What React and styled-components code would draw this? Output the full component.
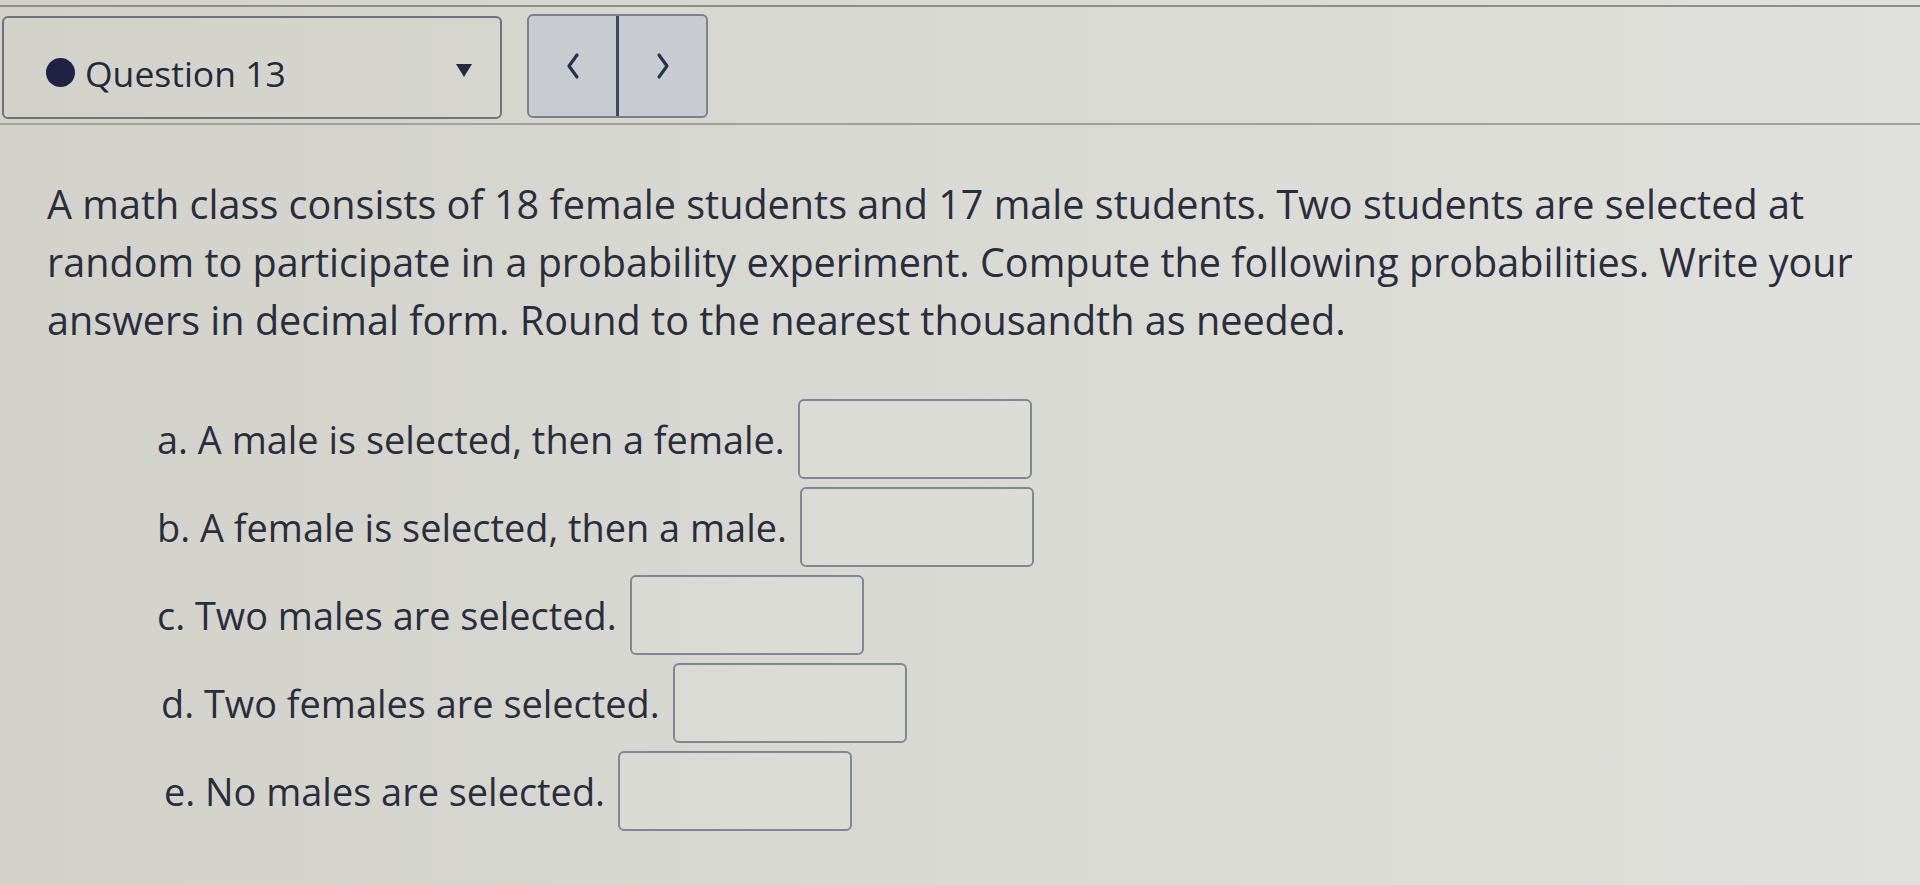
import styled, { createGlobalStyle } from 'styled-components'

const Global = createGlobalStyle`
  html, body {
    margin: 0;
    padding: 0;
  }
  body {
    width: 1920px;
    height: 885px;
    overflow: hidden;
    background: linear-gradient(90deg, #d2d2cb 0%, #d9d9d3 45%, #e0e0dc 100%);
    font-family: "Open Sans", "Noto Sans", sans-serif;
    color: #2c2f3d;
  }
`

const Page = styled.div`
  display: flex;
  flex-direction: column;
  height: 885px;
`

const TopRule = styled.div`
  margin-top: 5px;
  height: 2px;
  background: #8e8e89;
`

const Header = styled.div`
  display: flex;
  align-items: flex-start;
  gap: 25px;
  padding: 7px 0 0 2px;
  height: 118px;
  box-sizing: border-box;
  border-bottom: 2px solid #a2a29c;
`

const Dropdown = styled.div`
  display: flex;
  align-items: center;
  width: 500px;
  height: 103px;
  margin-top: 2px;
  box-sizing: border-box;
  border: 2px solid #6f7277;
  border-radius: 6px;
  padding: 10px 28px 0 42px;
`

const Dot = styled.span`
  width: 29px;
  height: 29px;
  border-radius: 50%;
  background: #1f2242;
  flex: none;
`

const QuestionLabel = styled.span`
  margin-left: 10px;
  font-size: 35.5px;
  font-weight: 500;
  color: #242838;
  flex: 1;
`

const Caret = styled.span`
  width: 0;
  height: 0;
  margin-top: -4px;
  border-left: 8px solid transparent;
  border-right: 8px solid transparent;
  border-top: 13px solid #262a40;
`

const Nav = styled.div`
  display: flex;
  height: 104px;
  box-sizing: border-box;
  border: 2px solid #7c8087;
  border-radius: 6px;
  background: #c8ccd0;
  overflow: hidden;
`

const NavButton = styled.div`
  width: 87px;
  display: flex;
  align-items: center;
  justify-content: center;
  border-left: ${p => (p.$divider ? '3px solid #3b4860' : 'none')};
`

const Body = styled.div`
  padding: 50px 0 0 47px;
`

const Prompt = styled.p`
  margin: 0;
  width: 1860px;
  font-size: 39.6px;
  font-weight: 500;
  line-height: 58px;
  color: #2a2d3c;
`

const Items = styled.div`
  display: flex;
  flex-direction: column;
  gap: 8px;
  margin-top: 50px;
  padding-left: 110px;
`

const Item = styled.div`
  display: flex;
  align-items: center;
  gap: 13px;
  height: 80px;
  padding-left: ${p => p.$shift || 0}px;
`

const ItemText = styled.span`
  font-size: 37.9px;
  font-weight: 500;
  color: #2a2d3c;
`

const AnswerBox = styled.div`
  width: 234px;
  height: 80px;
  box-sizing: border-box;
  border: 2px solid #80878f;
  border-radius: 6px;
  background: rgba(255, 255, 255, 0.08);
`

const Chevron = ({ dir }) => (
  <svg width="16" height="28" viewBox="0 0 16 28">
    <polyline
      points={dir === 'left' ? '12,3 4,14 12,25' : '4,3 12,14 4,25'}
      fill="none"
      stroke="#283150"
      strokeWidth="3.2"
      strokeLinecap="round"
      strokeLinejoin="round"
    />
  </svg>
)

const items = [
  { text: 'a. A male is selected, then a female.' },
  { text: 'b. A female is selected, then a male.' },
  { text: 'c. Two males are selected.' },
  { text: 'd. Two females are selected.', shift: 4 },
  { text: 'e. No males are selected.', shift: 7 },
]

export default function App() {
  return (
    <Page>
      <Global />
      <TopRule />
      <Header>
        <Dropdown>
          <Dot />
          <QuestionLabel>Question 13</QuestionLabel>
          <Caret />
        </Dropdown>
        <Nav>
          <NavButton>
            <Chevron dir="left" />
          </NavButton>
          <NavButton $divider>
            <Chevron dir="right" />
          </NavButton>
        </Nav>
      </Header>
      <Body>
        <Prompt>
          A math class consists of 18 female students and 17 male students. Two students are selected at
          random to participate in a probability experiment. Compute the following probabilities. Write your
          answers in decimal form. Round to the nearest thousandth as needed.
        </Prompt>
        <Items>
          {items.map(it => (
            <Item key={it.text} $shift={it.shift}>
              <ItemText>{it.text}</ItemText>
              <AnswerBox />
            </Item>
          ))}
        </Items>
      </Body>
    </Page>
  )
}
